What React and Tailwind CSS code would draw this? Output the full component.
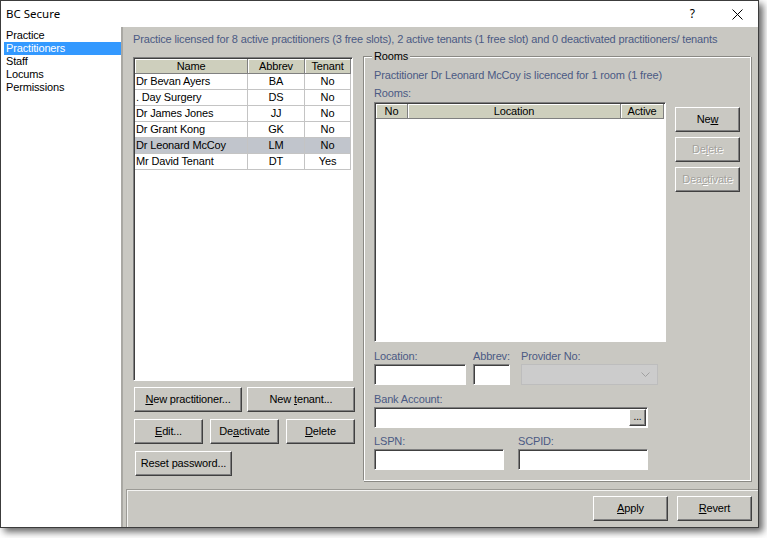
import React from 'react';

const raised = 'border border-t-white border-l-white border-b-[#404040] border-r-[#404040] shadow-[inset_-1px_-1px_0_#808080]';
const sunken = 'border border-t-[#808080] border-l-[#808080] border-b-white border-r-white shadow-[inset_1px_1px_0_#404040]';

function Btn({ children, className = '', disabled }) {
  return (
    <div
      className={`flex items-center justify-center bg-[#c9c8c2] ${raised} ${
        disabled ? 'text-[#a3a29d] [text-shadow:1px_1px_0_#fff]' : 'text-black'
      } ${className}`}
    >
      {children}
    </div>
  );
}

function Field({ label, className = '', children }) {
  return (
    <div className={`flex flex-col ${className}`}>
      <div className="h-[13px] leading-[13px] text-[#4b5a84]">{label}</div>
      <div className="mt-px">{children}</div>
    </div>
  );
}

const practitioners = [
  { name: 'Dr Bevan Ayers', abbrev: 'BA', tenant: 'No' },
  { name: '. Day Surgery', abbrev: 'DS', tenant: 'No' },
  { name: 'Dr James Jones', abbrev: 'JJ', tenant: 'No' },
  { name: 'Dr Grant Kong', abbrev: 'GK', tenant: 'No' },
  { name: 'Dr Leonard McCoy', abbrev: 'LM', tenant: 'No', selected: true },
  { name: 'Mr David Tenant', abbrev: 'DT', tenant: 'Yes' },
];

const menu = ['Practice', 'Practitioners', 'Staff', 'Locums', 'Permissions'];

const headCell = 'h-[15px] leading-[14px] text-center border-r border-b border-r-[#808080] border-b-[#808080] shadow-[inset_1px_1px_0_#fff]';

export default function App() {
  return (
    <div className="w-[767px] h-[538px] bg-white font-['Liberation_Sans',Arial,sans-serif] text-[11px] tracking-[-0.15px] text-black">
      <div className="w-[759px] h-[528px] border border-[#3c3c3c] flex flex-col shadow-[4px_4px_7px_rgba(0,0,0,0.6)]">
        {/* ── Title bar ── */}
        <div className="h-[26px] bg-white flex items-center pl-[5px] shrink-0">
          <span className="font-['Noto_Sans',sans-serif] text-[11.5px] tracking-normal">BC Secure</span>
          <span className="ml-auto font-['Noto_Sans',sans-serif] text-[12px] tracking-normal">?</span>
          <svg className="ml-[37px] mr-[15px]" width="11" height="11" viewBox="0 0 11 11">
            <path d="M0.5 0.5L10.5 10.5M10.5 0.5L0.5 10.5" stroke="#000" strokeWidth="1" />
          </svg>
        </div>

        {/* ── Body ── */}
        <div className="flex flex-1 min-h-0">
          {/* Left menu */}
          <div className="w-[120px] bg-white pt-[2px] pl-[3px] shrink-0">
            {menu.map(m => (
              <div
                key={m}
                className={`h-[13px] leading-[13px] pl-[2px] ${m === 'Practitioners' ? 'bg-[#3399ff] text-white' : ''}`}
              >
                {m}
              </div>
            ))}
          </div>
          <div className="w-[4px] border-l-2 border-l-[#a9a8a3] bg-[#c9c8c2] shrink-0" />

          {/* Right area */}
          <div className="flex-1 flex flex-col bg-[#c9c8c2]">
            <div className="h-[462px] pl-[8px] pt-[6px]">
              <div className="h-[13px] leading-[13px] text-[#4b5a84]">
                Practice licensed for 8 active practitioners (3 free slots), 2 active tenants (1 free slot) and 0 deactivated practitioners/ tenants
              </div>

              <div className="flex items-start mt-[10px]">
                {/* Practitioners column */}
                <div className="w-[222px] flex flex-col">
                  <div className={`mt-px w-[220px] h-[324px] bg-white p-[1px] ${sunken}`}>
                    <div className="grid grid-cols-[113px_57px_46px] bg-[#cecfbd]">
                      <div className={headCell}>Name</div>
                      <div className={headCell}>Abbrev</div>
                      <div className={headCell}>Tenant</div>
                    </div>
                    {practitioners.map(p => (
                      <div
                        key={p.name}
                        className={`grid grid-cols-[113px_57px_46px] h-[16px] leading-[15px] ${p.selected ? 'bg-[#c1c5cc]' : 'bg-white'}`}
                      >
                        <div className="pl-[1px] border-r border-b border-[#c4c4c4]">{p.name}</div>
                        <div className="text-center border-r border-b border-[#c4c4c4]">{p.abbrev}</div>
                        <div className="text-center border-r border-b border-[#c4c4c4]">{p.tenant}</div>
                      </div>
                    ))}
                  </div>

                  <div className="flex gap-[5px] mt-[6px] pl-px">
                    <Btn className="w-[108px] h-[25px]"><span><u>N</u>ew practitioner...</span></Btn>
                    <Btn className="w-[108px] h-[25px]"><span>New <u>t</u>enant...</span></Btn>
                  </div>
                  <div className="flex gap-[7px] mt-[7px] pl-px">
                    <Btn className="w-[69px] h-[25px]"><span><u>E</u>dit...</span></Btn>
                    <Btn className="w-[69px] h-[25px]"><span>De<u>a</u>ctivate</span></Btn>
                    <Btn className="w-[69px] h-[25px]"><span><u>D</u>elete</span></Btn>
                  </div>
                  <div className="flex mt-[7px] pl-[2px]">
                    <Btn className="w-[97px] h-[25px]">Reset password...</Btn>
                  </div>
                </div>

                {/* Rooms group box */}
                <div className="relative ml-[8px] w-[388px] h-[425px] border border-t-[#8a8984] border-l-[#8a8984] border-b-white border-r-white shadow-[inset_1px_1px_0_#fff,1px_1px_0_#8a8984] pl-[10px] pt-[12px]">
                  <div className="absolute -top-[7px] left-[8px] px-[2px] bg-[#c9c8c2] leading-[13px]">Rooms</div>
                  <div className="h-[13px] leading-[13px] text-[#4b5a84]">
                    Practitioner Dr Leonard McCoy is licenced for 1 room (1 free)
                  </div>
                  <div className="h-[13px] leading-[13px] text-[#4b5a84] mt-[5px]">Rooms:</div>

                  <div className="flex items-start mt-[2px]">
                    <div className={`w-[292px] h-[240px] bg-white p-px ${sunken}`}>
                      <div className="grid grid-cols-[32px_213px_43px] bg-[#cecfbd]">
                        <div className={headCell}>No</div>
                        <div className={headCell}>Location</div>
                        <div className={headCell}>Active</div>
                      </div>
                    </div>
                    <div className="flex flex-col gap-[5px] ml-[9px] mt-[5px]">
                      <Btn className="w-[65px] h-[25px]"><span>Ne<u>w</u></span></Btn>
                      <Btn className="w-[65px] h-[25px]" disabled><span>De<u>l</u>ete</span></Btn>
                      <Btn className="w-[65px] h-[25px]" disabled><span>Dea<u>c</u>tivate</span></Btn>
                    </div>
                  </div>

                  <div className="flex mt-[8px]">
                    <Field label="Location:">
                      <div className={`w-[92px] h-[21px] bg-white ${sunken}`} />
                    </Field>
                    <Field label="Abbrev:" className="ml-[7px]">
                      <div className={`w-[37px] h-[21px] bg-white ${sunken}`} />
                    </Field>
                    <Field label="Provider No:" className="ml-[11px]">
                      <div className="w-[137px] h-[21px] bg-[#cccccc] border border-[#bdbdbd] flex items-center justify-end pr-[7px]">
                        <svg width="9" height="5" viewBox="0 0 9 5">
                          <path d="M0.5 0.5L4.5 4.5L8.5 0.5" stroke="#a0a0a0" fill="none" strokeWidth="1" />
                        </svg>
                      </div>
                    </Field>
                  </div>

                  <Field label="Bank Account:" className="mt-[8px]">
                    <div className={`w-[274px] h-[21px] bg-white flex items-center justify-end pr-px ${sunken}`}>
                      <Btn className="w-[17px] h-[17px] text-[10px] leading-none items-end pb-[3px]">...</Btn>
                    </div>
                  </Field>

                  <div className="flex mt-[7px]">
                    <Field label="LSPN:">
                      <div className={`w-[130px] h-[21px] bg-white ${sunken}`} />
                    </Field>
                    <Field label="SCPID:" className="ml-[14px]">
                      <div className={`w-[130px] h-[21px] bg-white ${sunken}`} />
                    </Field>
                  </div>
                </div>
              </div>
            </div>

            {/* Bottom panel */}
            <div className="flex-1 ml-px border-t border-l border-[#9c9b96] shadow-[inset_1px_1px_0_#f4f4f2] flex justify-end items-start pt-[6px] pr-[6px] gap-[9px]">
              <Btn className="w-[75px] h-[25px]"><span><u>A</u>pply</span></Btn>
              <Btn className="w-[75px] h-[25px]"><span><u>R</u>evert</span></Btn>
            </div>
          </div>
        </div>
      </div>
    </div>
  );
}
